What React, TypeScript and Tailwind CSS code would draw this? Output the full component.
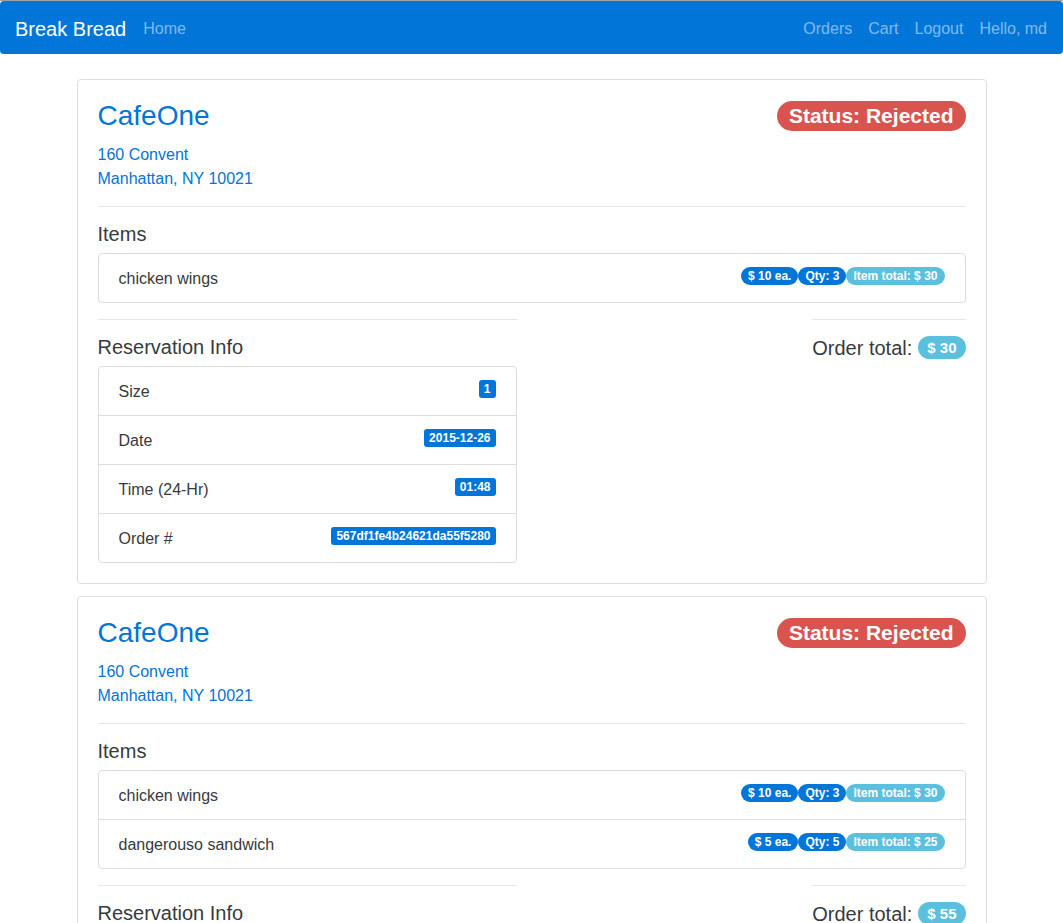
import React from 'react';

type Item = { name: string; price: number; qty: number };
type Order = {
  restaurant: string;
  street: string;
  city: string;
  status: string;
  items: Item[];
  size: number;
  date: string;
  time: string;
  id: string;
};

const orders: Order[] = [
  {
    restaurant: 'CafeOne',
    street: '160 Convent',
    city: 'Manhattan, NY 10021',
    status: 'Rejected',
    items: [{ name: 'chicken wings', price: 10, qty: 3 }],
    size: 1,
    date: '2015-12-26',
    time: '01:48',
    id: '567df1fe4b24621da55f5280',
  },
  {
    restaurant: 'CafeOne',
    street: '160 Convent',
    city: 'Manhattan, NY 10021',
    status: 'Rejected',
    items: [
      { name: 'chicken wings', price: 10, qty: 3 },
      { name: 'dangerouso sandwich', price: 5, qty: 5 },
    ],
    size: 2,
    date: '2015-12-26',
    time: '01:52',
    id: '567df2c44b24621da55f5281',
  },
];

const Navbar: React.FC = () => (
  <div className="border-t border-[#a3a3a3]">
    <nav className="h-[53px] bg-[#0275d8] rounded-[4px] px-[15px] pt-[2px] flex items-center">
      <span className="text-white text-[20px] mr-[17px]">Break Bread</span>
      <span className="text-white/50 text-[16px]">Home</span>
      <div className="ml-auto flex gap-4 text-white/50 text-[16px] pr-px">
        <span>Orders</span>
        <span>Cart</span>
        <span>Logout</span>
        <span>Hello, md</span>
      </div>
    </nav>
  </div>
);

const ResRow: React.FC<{ label: string; value: string | number; last?: boolean }> = ({ label, value, last }) => (
  <div className={`flex items-start justify-between px-5 pt-[13px] pb-[11px] leading-6 ${last ? '' : 'border-b border-[#ddd]'}`}>
    <span>{label}</span>
    <span className="bg-[#0275d8] text-white font-bold text-[12px] leading-3 px-[5px] py-[3px] rounded-[3px]">
      {value}
    </span>
  </div>
);

const OrderCard: React.FC<{ order: Order }> = ({ order }) => {
  const total = order.items.reduce((s, i) => s + i.price * i.qty, 0);
  return (
    <div className="border border-[#ddd] rounded-[4px] p-5 mb-3 bg-white">
      <div className="flex items-start justify-between h-[35px] mb-2">
        <h2 className="text-[28px] leading-[31px] text-[#0275d8]">{order.restaurant}</h2>
        <span className="bg-[#d9534f] text-white font-bold text-[21px] leading-[21px] px-[12px] pt-[4px] pb-[5px] rounded-full mt-px">
          Status: {order.status}
        </span>
      </div>
      <div className="text-[#0275d8] leading-6">
        <div>{order.street}</div>
        <div>{order.city}</div>
      </div>
      <hr className="border-[#e5e5e5] mt-[15px] mb-4" />
      <h4 className="text-[20px] leading-[22px] mb-2">Items</h4>
      <div className="border border-[#ddd] rounded-[4px]">
        {order.items.map((item, idx) => (
          <div
            key={idx}
            className={`flex items-start justify-between px-5 pt-[13px] pb-[11px] leading-6 ${idx < order.items.length - 1 ? 'border-b border-[#ddd]' : ''}`}
          >
            <span>{item.name}</span>
            <span className="flex text-white font-bold text-[12px] leading-3">
              <span className="bg-[#0275d8] px-[7px] py-[3px] rounded-full">$ {item.price} ea.</span>
              <span className="bg-[#0275d8] px-[7px] py-[3px] rounded-full">Qty: {item.qty}</span>
              <span className="bg-[#5bc0de] px-[7px] py-[3px] rounded-full">Item total: $ {item.price * item.qty}</span>
            </span>
          </div>
        ))}
      </div>
      <div className="grid grid-cols-2 gap-[30px]">
        <div>
          <hr className="border-[#e5e5e5] mt-4 mb-4" />
          <h4 className="text-[20px] leading-[22px] mb-2">Reservation Info</h4>
          <div className="border border-[#ddd] rounded-[4px]">
            <ResRow label="Size" value={order.size} />
            <ResRow label="Date" value={order.date} />
            <ResRow label="Time (24-Hr)" value={order.time} />
            <ResRow label="Order #" value={order.id} last />
          </div>
        </div>
        <div className="flex justify-end items-start">
          <div>
            <hr className="border-[#e5e5e5] mt-4 mb-4" />
            <h4 className="text-[20px] leading-[22px] flex items-center gap-[6px]">
              Order total:
              <span className="bg-[#5bc0de] text-white font-bold text-[15px] leading-[15px] px-[9px] py-[4px] rounded-full">
                $ {total}
              </span>
            </h4>
          </div>
        </div>
      </div>
    </div>
  );
};

const App: React.FC = () => {
  return (
    <div className="min-h-screen bg-white text-[#373a3c] text-[16px] font-['Liberation_Sans',Arial,sans-serif]">
      <Navbar />
      <div className="w-[940px] mx-auto px-[15px] pt-[25px]">
        {orders.map((o, i) => (
          <OrderCard key={i} order={o} />
        ))}
      </div>
    </div>
  );
};

export default App;
